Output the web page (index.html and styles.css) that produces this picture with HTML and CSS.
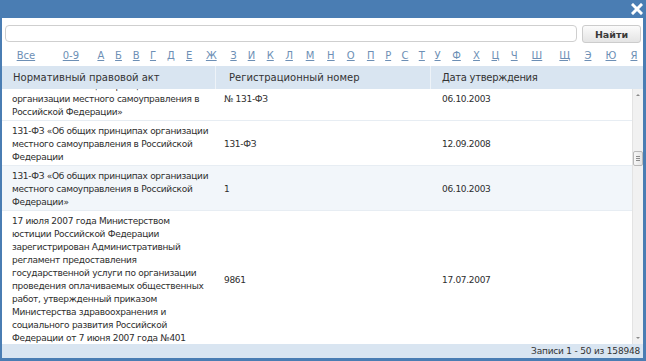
FILE: index.html
```html
<!DOCTYPE html>
<html lang="ru">
<head>
<meta charset="utf-8">
<title>Нормативные правовые акты</title>
<link rel="stylesheet" href="styles.css">
</head>
<body>
<div class="window">
  <div class="titlebar">
    <span class="close" title="Закрыть">
      <svg width="12" height="12" viewBox="0 0 12 12"><path d="M2 2 L10 10 M10 2 L2 10" stroke="#fff" stroke-width="3" stroke-linecap="square"/></svg>
    </span>
  </div>
  <div class="content">
    <div class="search">
      <input class="search-input" type="text">
      <button class="find" type="button">Найти</button>
    </div>
    <div class="alphabet">
      <a href="#">Все</a><a href="#">0-9</a><a href="#">А</a><a href="#">Б</a><a href="#">В</a><a href="#">Г</a><a href="#">Д</a><a href="#">Е</a><a href="#">Ж</a><a href="#">З</a><a href="#">И</a><a href="#">К</a><a href="#">Л</a><a href="#">М</a><a href="#">Н</a><a href="#">О</a><a href="#">П</a><a href="#">Р</a><a href="#">С</a><a href="#">Т</a><a href="#">У</a><a href="#">Ф</a><a href="#">Х</a><a href="#">Ц</a><a href="#">Ч</a><a href="#">Ш</a><a href="#">Щ</a><a href="#">Э</a><a href="#">Ю</a><a href="#">Я</a>
    </div>
    <div class="grid-head">
      <div class="hcell c1">Нормативный правовой акт</div>
      <div class="hcell c2">Регистрационный номер</div>
      <div class="hcell c3">Дата утверждения</div>
    </div>
    <div class="grid-body">
      <div class="viewport">
        <div class="rows">
          <div class="row">
            <div class="cell act">№ 131-ФЗ «Об общих принципах<br>организации местного самоуправления в<br>Российской Федерации»</div>
            <div class="cell mid">№ 131-ФЗ</div>
            <div class="cell mid">06.10.2003</div>
          </div>
          <div class="row">
            <div class="cell act">131-ФЗ «Об общих принципах организации<br>местного самоуправления в Российской<br>Федерации</div>
            <div class="cell mid">131-ФЗ</div>
            <div class="cell mid">12.09.2008</div>
          </div>
          <div class="row alt">
            <div class="cell act">131-ФЗ «Об общих принципах организации<br>местного самоуправления в Российской<br>Федерации»</div>
            <div class="cell mid">1</div>
            <div class="cell mid">06.10.2003</div>
          </div>
          <div class="row">
            <div class="cell act">17 июля 2007 года Министерством<br>юстиции Российской Федерации<br>зарегистрирован Административный<br>регламент предоставления<br>государственной услуги по организации<br>проведения оплачиваемых общественных<br>работ, утвержденный приказом<br>Министерства здравоохранения и<br>социального развития Российской<br>Федерации от 7 июня 2007 года №401</div>
            <div class="cell mid">9861</div>
            <div class="cell mid">17.07.2007</div>
          </div>
        </div>
      </div>
      <div class="scrollbar">
        <div class="sb-btn"><span class="arrow up"></span></div>
        <div class="sb-track"><div class="sb-thumb"><span></span><span></span><span></span></div></div>
        <div class="sb-btn"><span class="arrow down"></span></div>
      </div>
    </div>
    <div class="footer">Записи 1 - 50 из 158948</div>
  </div>
</div>
</body>
</html>
```
FILE: styles.css
```css
html, body {
  margin: 0;
  padding: 0;
  background: #fff;
}
body {
  font-family: "DejaVu Sans", "Liberation Sans", sans-serif;
  font-size: 10px;
  color: #333;
}
.window {
  width: 646px;
  height: 361px;
  box-sizing: border-box;
  background: #4a7db3;
  padding: 0 3px 3px 2px;
  display: flex;
  flex-direction: column;
}
.titlebar {
  height: 18px;
  flex: none;
  display: flex;
  justify-content: flex-end;
  align-items: center;
}
.close {
  display: flex;
  width: 12px;
  height: 12px;
}
.content {
  flex: 1;
  min-height: 0;
  background: #fff;
  display: flex;
  flex-direction: column;
}
.search {
  display: flex;
  gap: 5px;
  padding: 7px 2px 0 3px;
  flex: none;
}
.search-input {
  flex: 1;
  height: 17px;
  box-sizing: border-box;
  margin: 0;
  border: 1px solid #cfcfcf;
  border-radius: 4px;
  background: #fff;
  outline: none;
}
.find {
  width: 59px;
  height: 18px;
  box-sizing: border-box;
  margin: 0;
  padding: 0;
  border: 1px solid #cccccc;
  border-radius: 3px;
  background: linear-gradient(#fbfbfb, #e4e4e4);
  font-family: inherit;
  font-size: 9.5px;
  font-weight: bold;
  color: #3a3a3a;
}
.alphabet {
  flex: none;
  display: table;
  width: 100%;
  height: 23px;
  box-sizing: border-box;
  padding-top: 6px;
}
.alphabet a {
  display: table-cell;
  text-align: center;
  vertical-align: top;
  color: #6d8fb5;
  font-size: 10px;
  line-height: 14px;
  text-decoration: underline;
}
.grid-head {
  flex: none;
  height: 23px;
  display: grid;
  grid-template-columns: 213px 215px 1fr;
  background: #d9e5f1;
}
.hcell {
  display: flex;
  align-items: center;
  color: #333;
  white-space: nowrap;
}
.hcell.c1 { padding-left: 11px; }
.hcell.c2 { padding-left: 13px; border-left: 1px solid #eef3f8; }
.hcell.c3 { padding-left: 11px; border-left: 1px solid #eef3f8; letter-spacing: -0.3px; }
.grid-body {
  flex: 1;
  min-height: 0;
  display: flex;
}
.viewport {
  flex: 1;
  overflow: hidden;
}
.rows {
  margin-top: -13px;
}
.row {
  display: grid;
  grid-template-columns: 212px 218px 1fr;
  padding: 4px 0 1px;
  border-bottom: 1px solid #e7edf3;
  line-height: 13px;
  background: #fff;
}
.row.alt {
  background: #f2f6fa;
}
.cell {
  padding-left: 10px;
  color: #2d2d2d;
  white-space: nowrap;
  font-size: 9px;
  letter-spacing: -0.3px;
}
.cell.mid {
  align-self: center;
}
.scrollbar {
  width: 11px;
  flex: none;
  display: flex;
  flex-direction: column;
  background: #f1f1f1;
  border-left: 1px solid #e3e3e3;
  box-sizing: border-box;
}
.sb-btn {
  height: 12px;
  display: flex;
  justify-content: center;
  align-items: center;
}
.arrow {
  width: 0;
  height: 0;
  border-left: 2px solid transparent;
  border-right: 2px solid transparent;
}
.arrow.up { border-bottom: 2px solid #8a8a8a; }
.arrow.down { border-top: 2px solid #8a8a8a; }
.sb-track {
  flex: 1;
}
.sb-thumb {
  margin-top: 50px;
  height: 15px;
  box-sizing: border-box;
  border: 1px solid #b9b9b9;
  border-radius: 2px;
  background: linear-gradient(90deg, #f7f7f7, #e5e5e5);
  display: flex;
  flex-direction: column;
  justify-content: center;
  align-items: center;
  gap: 1px;
}
.sb-thumb span {
  width: 4px;
  height: 1px;
  background: #8c8c8c;
}
.footer {
  flex: none;
  height: 14px;
  line-height: 14px;
  background: #d9e5f1;
  text-align: right;
  padding-right: 3px;
  color: #333;
  font-size: 9px;
  letter-spacing: -0.2px;
}
```
